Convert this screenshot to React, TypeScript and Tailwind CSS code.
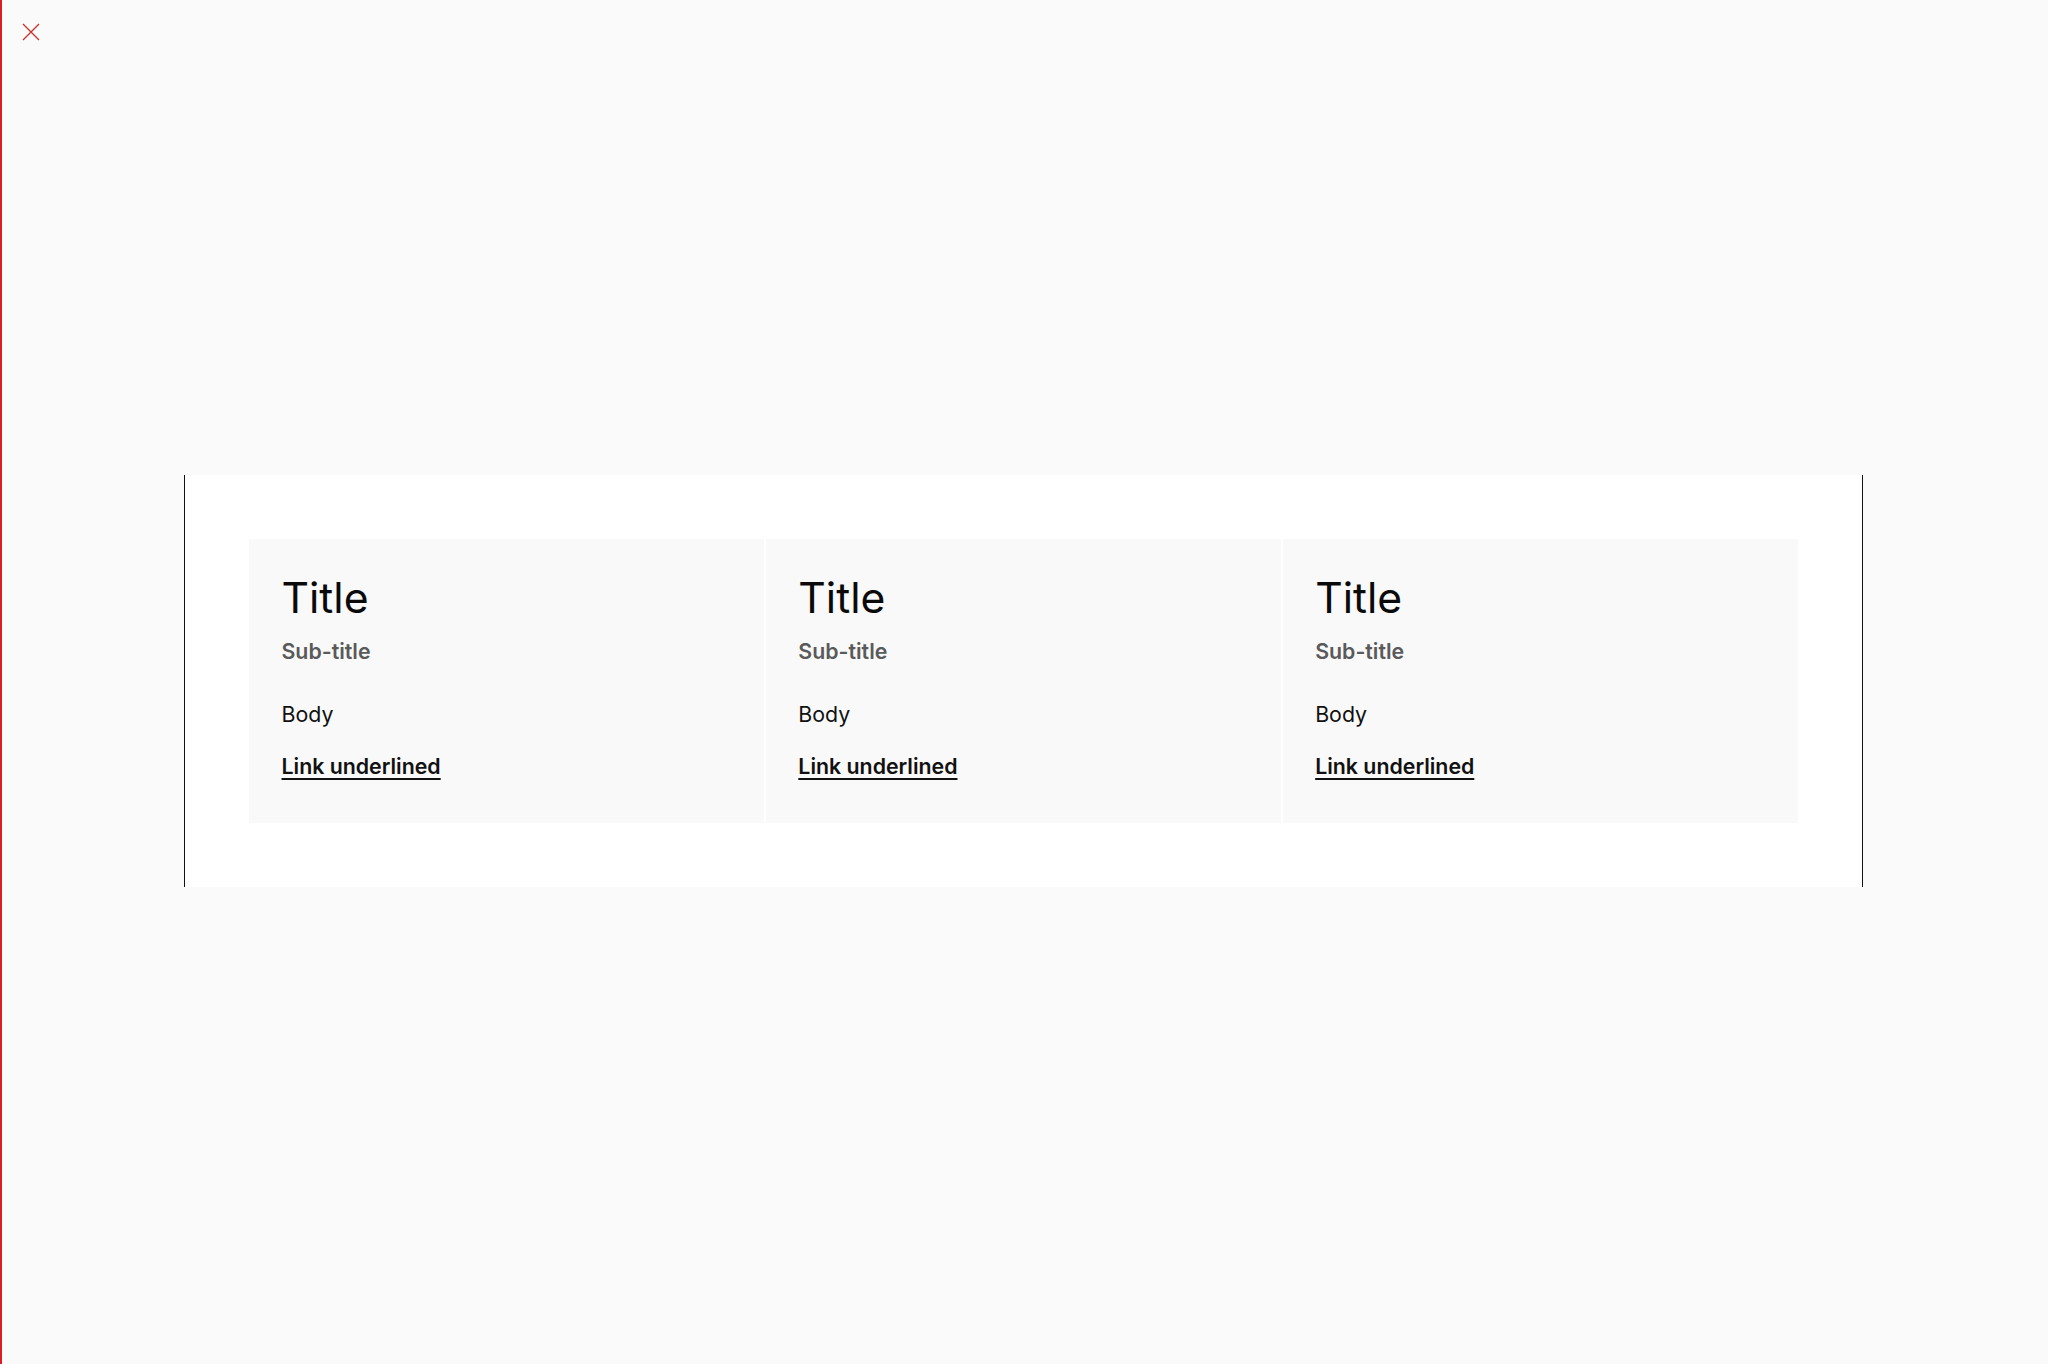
export default function App() {
  const cards = [0, 1, 2];
  return (
    <div
      className="relative min-h-screen w-full bg-[#fafafa] border-l-[2.5px] border-[#da1e28] flex items-center"
      style={{ fontFamily: "Inter, 'Noto Sans', sans-serif" }}
    >
      <button className="absolute left-[12.5px] top-[15.5px] w-8 h-8 flex items-center justify-center text-[#c8302a]">
        <svg width="32" height="32" viewBox="0 0 32 32" fill="none" stroke="currentColor" strokeWidth="1.3">
          <path d="M8 8L24 24M24 8L8 24" />
        </svg>
      </button>
      <div className="ml-[182px] w-[1679px] bg-white border-x-[1.5px] border-[#111111] p-[64px] mt-[-2px]">
        <div className="grid grid-cols-3 gap-[1.5px]">
          {cards.map((i) => (
            <div key={i} className="bg-[#f9f9f9] pt-[32px] pl-[32.5px] pr-[32px] pb-[41px] flex flex-col items-start">
              <div className="text-[42.67px] leading-[53.33px] font-normal text-[#0a0a0a]">Title</div>
              <div className="mt-[10px] text-[21.33px] leading-[32px] font-semibold text-[#5a5a5a]">Sub-title</div>
              <div className="mt-[31px] text-[21.33px] leading-[32px] font-normal text-[#111111]">Body</div>
              <a
                href="#"
                className="mt-[20px] text-[21.33px] leading-[32px] font-semibold text-[#111111] underline decoration-[1.5px] underline-offset-[4px]"
              >
                Link underlined
              </a>
            </div>
          ))}
        </div>
      </div>
    </div>
  );
}
